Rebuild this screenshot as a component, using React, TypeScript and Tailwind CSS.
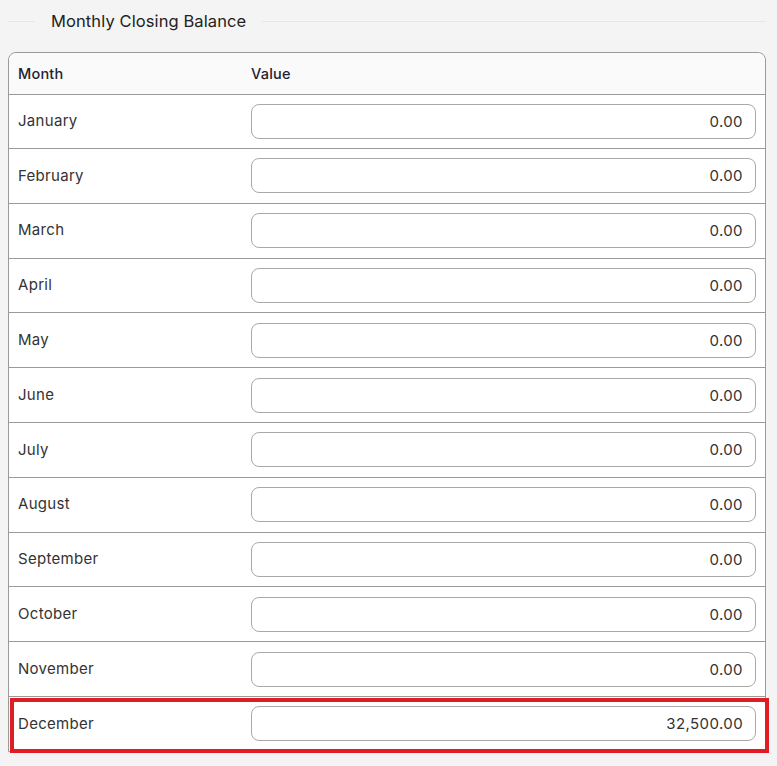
import React from "react";

const months = [
  "January",
  "February",
  "March",
  "April",
  "May",
  "June",
  "July",
  "August",
  "September",
  "October",
  "November",
];

function ValueInput({ value }: { value: string }) {
  return (
    <input
      readOnly
      value={value}
      className="h-[35px] w-full rounded-[8px] border border-[#a9a9a9] bg-white px-[12px] text-right text-[15px] tracking-[0.4px] text-[#333] outline-none"
    />
  );
}

export default function App() {
  return (
    <div
      className="min-h-screen w-full overflow-hidden bg-[#f4f4f4] pl-[8px] pr-[11px] pt-[10px]"
      style={{ fontFamily: 'Inter, "Noto Sans", sans-serif' }}
    >
      <div className="flex h-[22px] items-center">
        <div className="h-px w-[27px] bg-[#e6e6e6]" />
        <div className="px-[16px] text-[16.5px] tracking-[0.1px] text-[#222]">Monthly Closing Balance</div>
        <div className="h-px flex-1 bg-[#e6e6e6]" />
      </div>
      <div className="relative mt-[20px] rounded-t-[8px] border border-[#9a9a9a] bg-white">
        <div className="grid h-[42px] grid-cols-[233px_1fr] items-center rounded-t-[8px] border-b border-[#9a9a9a] bg-[#fafafa] pl-[9px] pr-[9px] text-[14.5px] font-medium tracking-[0.2px] text-[#1f2233]">
          <div>Month</div>
          <div>Value</div>
        </div>
        {months.map((m, i) => (
          <div
            key={m}
            className={
              (i === 0 ? "h-[54px] " : "h-[54.8px] ") +
              "grid grid-cols-[233px_1fr] items-center border-b border-[#9a9a9a] pl-[9px] pr-[9px] text-[15px] tracking-[0.3px] text-[#333]"
            }
          >
            <div>{m}</div>
            <ValueInput value="0.00" />
          </div>
        ))}
        <div className="relative grid h-[54px] grid-cols-[233px_1fr] items-center pl-[9px] pr-[9px] text-[15px] tracking-[0.3px] text-[#333]">
          <div>December</div>
          <ValueInput value="32,500.00" />
          <div className="pointer-events-none absolute left-[1px] right-[-4px] top-[1px] bottom-[-2px] border-[4.5px] border-[#e31b23]" />
        </div>
      </div>
    </div>
  );
}
